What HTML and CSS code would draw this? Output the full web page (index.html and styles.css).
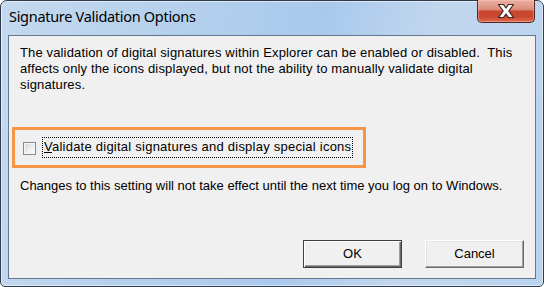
FILE: index.html
```html
<!DOCTYPE html>
<html>
<head>
<meta charset="utf-8">
<link rel="stylesheet" href="styles.css">
</head>
<body>
<div class="window">
  <div class="titlebar">
    <div class="title">Signature Validation Options</div>
    <div class="close">
      <svg width="20" height="16" viewBox="0 0 20 16">
        <path d="M2.5 1.5 H7.5 L10 5 L12.5 1.5 H17.5 L12.8 8 L17.5 14.5 H12.5 L10 11 L7.5 14.5 H2.5 L7.2 8 Z" fill="#ffffff" stroke="#3e2622" stroke-width="1.2" stroke-linejoin="round"/>
      </svg>
    </div>
  </div>
  <div class="content">
    <p class="intro">The validation of digital signatures within Explorer can be enabled or disabled.&nbsp; This affects only the icons displayed, but not the ability to manually validate digital signatures.</p>
    <div class="highlight">
      <span class="checkbox"></span>
      <span class="label"><u>V</u>alidate digital signatures and display special icons</span>
    </div>
    <p class="note">Changes to this setting will not take effect until the next time you log on to Windows.</p>
    <div class="buttons">
      <div class="btn default">OK</div>
      <div class="btn">Cancel</div>
    </div>
  </div>
</div>
</body>
</html>
```
FILE: styles.css
```css
html, body {
  margin: 0;
  padding: 0;
  background: #ffffff;
}
body {
  width: 544px;
  height: 287px;
  overflow: hidden;
}
.window {
  box-sizing: border-box;
  width: 544px;
  height: 287px;
  border: 1px solid #2f3b4a;
  border-radius: 7px 7px 5px 5px;
  background: linear-gradient(100deg, #c4d9ef 0%, #b5d0ec 30%, #a9c9ec 55%, #c2d7ee 75%, #b9d3ee 100%);
  padding: 0 7px 7px 7px;
  display: flex;
  flex-direction: column;
  box-shadow: inset 0 0 0 1px rgba(255,255,255,0.55);
}
.titlebar {
  height: 34px;
  display: flex;
  align-items: flex-start;
  justify-content: space-between;
}
.title {
  font-family: "Noto Sans", "Open Sans", sans-serif;
  font-size: 14.5px;
  color: #000000;
  margin-top: 5px;
  margin-left: 1px;
  letter-spacing: -0.3px;
}
.close {
  box-sizing: border-box;
  width: 58px;
  height: 23px;
  margin-right: 1px;
  margin-top: -1px;
  border: 1px solid #4b2620;
  border-top: none;
  border-radius: 0 0 5px 5px;
  background: linear-gradient(#eab0a2 0%, #dc8e7b 42%, #c8462d 52%, #c9472e 75%, #e06a4e 100%);
  box-shadow: inset 0 0 0 1px rgba(255,200,190,0.45);
  display: flex;
  align-items: center;
  justify-content: center;
}
.close svg { display: block; }
.content {
  flex: 1;
  border: 1px solid #65778c;
  background: #f0f0f0;
  display: flex;
  flex-direction: column;
  font-family: "Liberation Sans", Arial, sans-serif;
  font-size: 13px;
  line-height: 16px;
  color: #000000;
}
.intro {
  margin: 9px 14px 0 11px;
  letter-spacing: 0.14px;
}
.highlight {
  box-sizing: border-box;
  width: 354px;
  height: 41px;
  margin: 34px 0 0 3px;
  border: 3px solid #f79646;
  display: flex;
  align-items: center;
  padding-left: 8px;
}
.checkbox {
  box-sizing: border-box;
  width: 13px;
  height: 13px;
  border: 1px solid #8a8a8a;
  background: linear-gradient(135deg, #d6d6d6 0%, #f0f0f0 60%, #ffffff 100%);
  box-shadow: inset 0 0 0 1px #f6f6f6;
  margin-top: 1px;
}
.label {
  margin-left: 7px;
  padding: 1px 1px 2px 1px;
  outline: 1px dotted #000000;
  outline-offset: 0;
  letter-spacing: 0.24px;
}
.note {
  margin: 10px 0 0 11px;
}
.buttons {
  margin-top: auto;
  display: flex;
  justify-content: flex-end;
  gap: 23px;
  padding: 0 11px 10px 0;
}
.btn {
  box-sizing: border-box;
  width: 99px;
  height: 28px;
  background: #f0f0f0;
  border: 1px solid;
  border-color: #ffffff #696969 #696969 #ffffff;
  box-shadow: inset -1px -1px 0 #a0a0a0, inset 1px 1px 0 #e3e3e3;
  display: flex;
  align-items: center;
  justify-content: center;
  color: #000000;
}
.btn.default {
  border: 1px solid #404040;
  box-shadow: inset 1px 1px 0 #ffffff, inset -1px -1px 0 #696969, inset -2px -2px 0 #a0a0a0;
}
```
